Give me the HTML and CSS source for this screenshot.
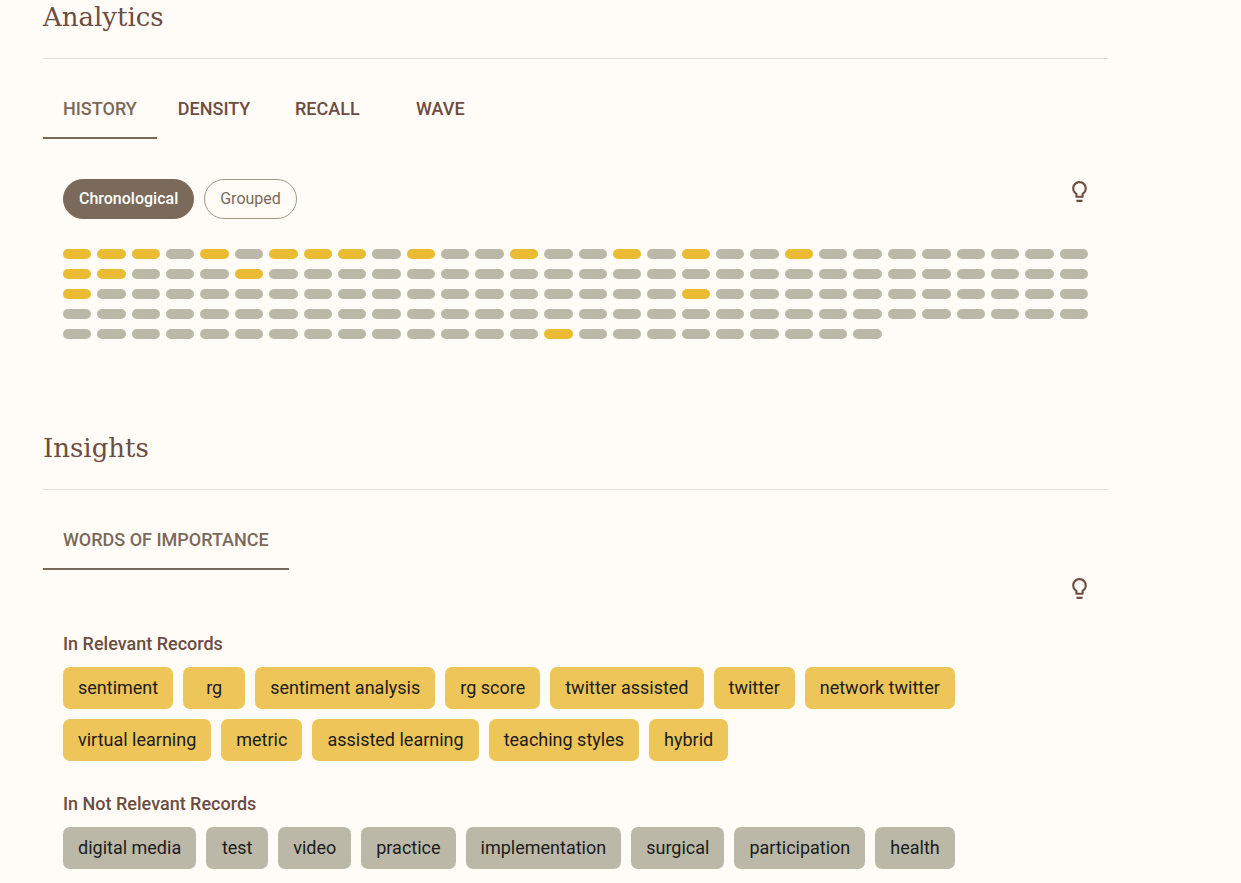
FILE: index.html
```html
<!DOCTYPE html>
<html lang="en">
<head>
<meta charset="utf-8">
<title>Analytics</title>
<link rel="stylesheet" href="styles.css">
</head>
<body>
<main class="page">
  <section class="section">
    <h2 class="section-title">Analytics</h2>
    <div class="tabs" role="tablist">
      <button class="tab tab-active" role="tab" aria-selected="true">HISTORY</button>
      <button class="tab" role="tab" aria-selected="false">DENSITY</button>
      <button class="tab" role="tab" aria-selected="false">RECALL</button>
      <button class="tab" role="tab" aria-selected="false">WAVE</button>
    </div>
    <div class="panel history-panel">
      <div class="toolbar">
        <div class="chips">
          <button class="chip chip-active" aria-pressed="true">Chronological</button>
          <button class="chip" aria-pressed="false">Grouped</button>
        </div>
        <button class="hint" aria-label="About this chart">
          <svg class="hint-icon" viewBox="0 0 24 24" aria-hidden="true"><path d="M9 21c0 .55.45 1 1 1h4c.55 0 1-.45 1-1v-1H9v1zm3-19C8.14 2 5 5.14 5 9c0 2.38 1.19 4.47 3 5.74V17c0 .55.45 1 1 1h6c.55 0 1-.45 1-1v-2.26c1.81-1.27 3-3.36 3-5.74 0-3.86-3.14-7-7-7zm2 11.7V16h-4v-2.3C8.480 12.630 7 11.530 7 9c0-2.760 2.240-5 5-5s5 2.240 5 5c0 2.490-1.510 3.650-3 4.700z"/></svg>
        </button>
      </div>
      <div class="history" id="history" role="img" aria-label="Reading history"></div>
    </div>
  </section>

  <section class="section">
    <h2 class="section-title">Insights</h2>
    <div class="tabs" role="tablist">
      <button class="tab tab-active" role="tab" aria-selected="true">WORDS OF IMPORTANCE</button>
    </div>
    <div class="panel words-panel">
      <div class="toolbar toolbar-end">
        <button class="hint" aria-label="About these words">
          <svg class="hint-icon" viewBox="0 0 24 24" aria-hidden="true"><path d="M9 21c0 .55.45 1 1 1h4c.55 0 1-.45 1-1v-1H9v1zm3-19C8.14 2 5 5.14 5 9c0 2.38 1.19 4.47 3 5.74V17c0 .55.45 1 1 1h6c.55 0 1-.45 1-1v-2.26c1.81-1.27 3-3.36 3-5.74 0-3.86-3.14-7-7-7zm2 11.7V16h-4v-2.3C8.480 12.630 7 11.530 7 9c0-2.760 2.240-5 5-5s5 2.240 5 5c0 2.490-1.510 3.650-3 4.700z"/></svg>
        </button>
      </div>
      <h3 class="words-title">In Relevant Records</h3>
      <ul class="words words-relevant">
        <li class="word">sentiment</li>
        <li class="word">rg</li>
        <li class="word">sentiment analysis</li>
        <li class="word">rg score</li>
        <li class="word">twitter assisted</li>
        <li class="word">twitter</li>
        <li class="word">network twitter</li>
        <li class="word">virtual learning</li>
        <li class="word">metric</li>
        <li class="word">assisted learning</li>
        <li class="word">teaching styles</li>
        <li class="word">hybrid</li>
      </ul>
      <h3 class="words-title">In Not Relevant Records</h3>
      <ul class="words">
        <li class="word">digital media</li>
        <li class="word">test</li>
        <li class="word">video</li>
        <li class="word">practice</li>
        <li class="word">implementation</li>
        <li class="word">surgical</li>
        <li class="word">participation</li>
        <li class="word">health</li>
      </ul>
    </div>
  </section>
</main>
<script src="script.js"></script>
</body>
</html>
```

FILE: styles.css
```css
* {
  box-sizing: border-box;
}

body {
  margin: 0;
  background: #fffcf7;
  color: #6d4c41;
  font-family: Roboto, "Liberation Sans", sans-serif;
}

button {
  font: inherit;
  color: inherit;
  background: none;
  border: 0;
  cursor: pointer;
}

.page {
  padding: 0 133px 14px 43px;
}

.section-title {
  margin: 0;
  padding-bottom: 24px;
  border-bottom: 1px solid #e0dcd7;
  font: 400 26px/34px "DejaVu Serif", serif;
}

.tabs {
  display: flex;
  gap: 1px;
  padding-top: 20px;
}

.tab {
  min-width: 112px;
  height: 60px;
  padding: 0 20px;
  border-bottom: 2px solid transparent;
  font-size: 18px;
  font-weight: 500;
}

.tab-active {
  color: #7b6959;
  border-bottom-color: #7b6959;
}

.panel {
  padding: 0 20px;
}

.history-panel {
  padding-top: 40px;
  padding-bottom: 92px;
}

.toolbar {
  display: flex;
  justify-content: space-between;
  align-items: flex-start;
}

.toolbar-end {
  justify-content: flex-end;
  padding-top: 6px;
}

.chips {
  display: flex;
  gap: 10px;
}

.chip {
  height: 40px;
  padding: 0 15px 2px;
  border: 1px solid #a39689;
  border-radius: 20px;
  color: #7b6959;
  font-size: 16px;
}

.chip-active {
  color: #fff;
  background: #7b6959;
  border-color: #7b6959;
  font-weight: 500;
}

.hint {
  display: flex;
  padding: 0;
  margin-right: -4px;
}

.hint-icon {
  width: 25px;
  height: 25px;
  fill: currentColor;
}

.history {
  display: grid;
  grid-template-columns: repeat(30, 1fr);
  gap: 10px 6px;
  margin-top: 30px;
}

.record {
  height: 10px;
  border-radius: 5px;
  background: #bbb8a8;
}

.record-relevant {
  background: #ebbb34;
}

.words-title {
  margin: 32px 0 12px;
  font-size: 18px;
  font-weight: 500;
  line-height: 22px;
}

.words {
  display: flex;
  flex-wrap: wrap;
  gap: 10px;
  max-width: 900px;
  margin: 0;
  padding: 0;
  list-style: none;
}

.word {
  min-width: 62px;
  padding: 10px 15px;
  border-radius: 7px;
  background: #bbb8a8;
  color: #1c1c1c;
  font-size: 18px;
  line-height: 22px;
  text-align: center;
}

.words-relevant .word {
  background: #edc558;
}
```

FILE: script.js
```js
const total = 144;
const relevant = new Set([0, 1, 2, 4, 6, 7, 8, 10, 13, 16, 18, 21, 30, 31, 35, 60, 78, 134]);
const history = document.getElementById("history");

for (let i = 0; i < total; i++) {
  const record = document.createElement("span");
  record.className = relevant.has(i) ? "record record-relevant" : "record";
  history.append(record);
}
```
